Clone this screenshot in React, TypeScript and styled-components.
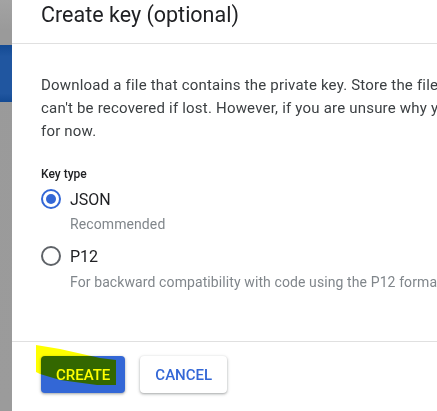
import React from 'react'
import styled, { createGlobalStyle } from 'styled-components'

const GlobalStyle = createGlobalStyle`
  html, body {
    margin: 0;
    padding: 0;
    background: #ffffff;
    overflow: hidden;
  }
  body {
    font-family: Roboto, "Noto Sans", Arial, sans-serif;
  }
`

const Page = styled.div`
  position: relative;
  display: flex;
  width: 437px;
  height: 411px;
  overflow: hidden;
`

const Backdrop = styled.div`
  width: 12px;
  flex: none;
  display: flex;
  flex-direction: column;
  background: linear-gradient(#a3a3a3, #9a9a9a 30px, #9b9b9b);
`

const BackdropBand = styled.div`
  margin-top: 45px;
  height: 57px;
  background: linear-gradient(#134a93, #2056a0 20%, #2056a0 85%, #134a93);
`

const Dialog = styled.div`
  flex: none;
  width: 680px;
  display: flex;
  flex-direction: column;
  background: #ffffff;
  color: #202124;
`

const Header = styled.div`
  height: 43px;
  padding-left: 29px;
  border-bottom: 1px solid #e0e0e0;
`

const Title = styled.h2`
  margin: 0;
  font-size: 21.5px;
  font-weight: 400;
  line-height: 30px;
  color: #202124;
`

const Body = styled.div`
  flex: 1;
  padding: 30px 0 0 29px;
`

const Text = styled.p`
  margin: 0;
  font-size: 15px;
  letter-spacing: 0.2px;
  line-height: 23px;
  color: #3c4043;
`

const Label = styled.div`
  margin-top: 23px;
  font-size: 12px;
  font-weight: 500;
  line-height: 16px;
  color: #202124;
`

const Option = styled.label<{ gap: number }>`
  display: flex;
  align-items: center;
  gap: 9px;
  margin-top: ${(p) => p.gap}px;
  height: 24px;
  font-size: 16px;
  color: #202124;
`

const Radio = styled.span<{ checked?: boolean }>`
  box-sizing: border-box;
  width: 20px;
  height: 20px;
  border-radius: 50%;
  border: 2px solid ${(p) => (p.checked ? '#3367d6' : '#5f6368')};
  display: flex;
  align-items: center;
  justify-content: center;

  &::after {
    content: '';
    width: 10px;
    height: 10px;
    border-radius: 50%;
    background: ${(p) => (p.checked ? '#3367d6' : 'transparent')};
  }
`

const Hint = styled.div<{ gap: number }>`
  margin-top: ${(p) => p.gap}px;
  padding-left: 29px;
  font-size: 14px;
  letter-spacing: 0.1px;
  line-height: 20px;
  color: #80868b;
`

const Footer = styled.div`
  height: 70px;
  box-sizing: border-box;
  border-top: 1px solid #e0e0e0;
  padding: 14px 0 0 29px;
  display: flex;
  align-items: flex-start;
  gap: 15px;
`

const Button = styled.button<{ primary?: boolean }>`
  height: 37px;
  padding: 0 15px;
  border: none;
  border-radius: 4px;
  font-family: Roboto, Arial, sans-serif;
  font-size: 15px;
  font-weight: 500;
  text-transform: uppercase;
  background: ${(p) => (p.primary ? '#3367d6' : '#ffffff')};
  color: ${(p) => (p.primary ? '#ffffff' : '#3367d6')};
  box-shadow: 0 1px 2px rgba(60, 64, 67, 0.3), 0 1px 3px 1px rgba(60, 64, 67, 0.15);
`

const Highlight = styled.svg`
  position: absolute;
  left: 0;
  top: 0;
  width: 437px;
  height: 411px;
  pointer-events: none;
  mix-blend-mode: multiply;
`

export default function App() {
  return (
    <Page>
      <GlobalStyle />
      <Backdrop>
        <BackdropBand />
      </Backdrop>
      <Dialog>
        <Header>
          <Title>Create key (optional)</Title>
        </Header>
        <Body>
          <Text>
            Download a file that contains the private key. Store the file securely because this key
            <br />
            can't be recovered if lost. However, if you are unsure why you need a key, skip this step
            <br />
            for now.
          </Text>
          <Label>Key type</Label>
          <Option gap={5}>
            <Radio checked />
            JSON
          </Option>
          <Hint gap={3}>Recommended</Hint>
          <Option gap={10}>
            <Radio />
            P12
          </Option>
          <Hint gap={4}>For backward compatibility with code using the P12 format</Hint>
        </Body>
        <Footer>
          <Button primary>Create</Button>
          <Button>Cancel</Button>
        </Footer>
      </Dialog>
      <Highlight viewBox="0 0 437 411">
        <polygon
          points="36,345 60,349 100,358 116,360 116,385 97,385 60,380 40,374 36,372"
          fill="#ffff00"
        />
      </Highlight>
    </Page>
  )
}
